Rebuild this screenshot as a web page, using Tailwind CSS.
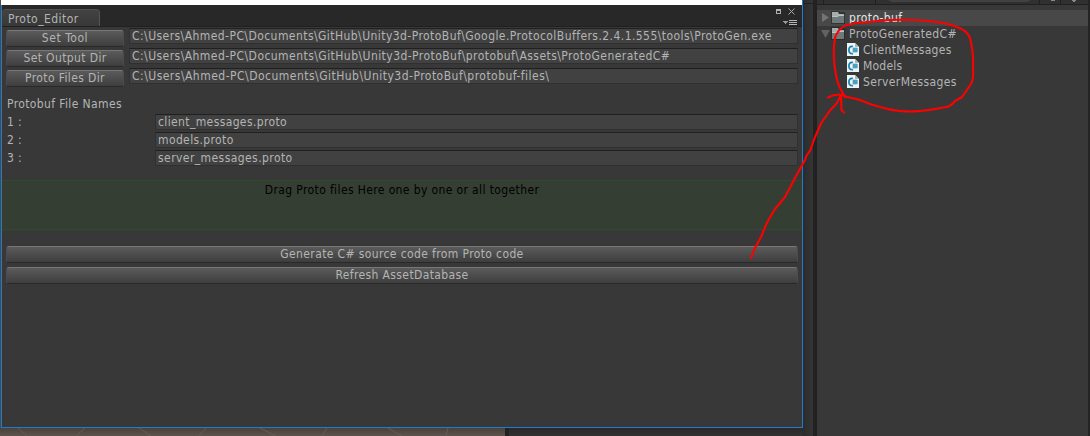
<!DOCTYPE html>
<html lang="en"><head><meta charset="utf-8"><title>Proto_Editor</title>
<script src="https://cdn.jsdelivr.net/npm/@tailwindcss/browser@4"></script></head>
<body class="relative h-[436px] w-[1090px] overflow-hidden bg-[#383838] font-['DejaVu_Sans_Condensed','DejaVu_Sans',sans-serif] text-[12px] leading-[16px] tracking-[0.38px] text-[#b4b4b4] [font-stretch:75%]">
<div class="flex h-full">
  <div class="flex w-[803px] shrink-0 flex-col bg-[#4c4a48]">
    <div class="ml-px h-[5px] shrink-0 border-r border-[#1c78cc] bg-white"></div>
    <main class="ml-px flex h-[423px] shrink-0 flex-col border-x border-b border-[#1f7bcc] bg-[#383838]">
      <header class="flex h-[22px] shrink-0 items-end justify-between border-b border-[#202020] bg-[#282828]">
        <div class="h-[17px] w-[98px] rounded-t-sm border-t border-r border-t-[#505050] border-r-[#555] bg-linear-to-b from-[#424242] to-[#383838] pt-px pl-[6px]"><span class="tracking-[0.45px]">Proto_Editor</span></div>
        <svg class="h-[21px] w-[30px]" viewBox="0 0 30 21" shape-rendering="crispEdges"><path fill="#b0b0b0" fill-rule="evenodd" d="M4 4h5v5H4zM5 6h3v2H5z"/><path d="m16.500 3.500 6 6m0-6-6 6" stroke="#aaa" shape-rendering="auto"/><path fill="#999" d="M11 16h5l-2.500 3z"/><path fill="#b5b5b5" d="M17 15h8v1h-8zM17 17h8v1h-8zM17 19h8v1h-8z"/></svg>
      </header>
      <section class="pl-[4px]">
        <div class="flex h-[20px] items-start gap-[5px]">
          <button class="mt-[3px] h-[17px] w-[118px] rounded-[3px] border border-[#4c4c4c] border-t-[#777] border-b-[#292929] bg-linear-to-b from-[#5b5b5b] to-[#3e3e3e] leading-[15px] tracking-[0.55px]">Set Tool</button>
          <div class="mt-px h-[16px] w-[669px] border border-[#303030] border-t-[#202020] bg-[#414141] pl-[2px] leading-[15px] whitespace-nowrap"><span class="tracking-[0.44px]">C:\Users\Ahmed-PC\Documents\GitHub\Unity3d-ProtoBuf\Google.ProtocolBuffers.2.4.1.555\tools\ProtoGen.exe</span></div>
        </div>
        <div class="flex h-[20px] items-start gap-[5px]">
          <button class="mt-[3px] h-[17px] w-[118px] rounded-[3px] border border-[#4c4c4c] border-t-[#777] border-b-[#292929] bg-linear-to-b from-[#5b5b5b] to-[#3e3e3e] leading-[15px]">Set Output Dir</button>
          <div class="mt-px h-[16px] w-[669px] border border-[#303030] border-t-[#202020] bg-[#414141] pl-[2px] leading-[15px]"><span class="tracking-[0.45px]">C:\Users\Ahmed-PC\Documents\GitHub\Unity3d-ProtoBuf\protobuf\Assets\ProtoGeneratedC#</span></div>
        </div>
        <div class="flex h-[20px] items-start gap-[5px]">
          <button class="mt-[3px] h-[17px] w-[118px] rounded-[3px] border border-[#4c4c4c] border-t-[#777] border-b-[#292929] bg-linear-to-b from-[#5b5b5b] to-[#3e3e3e] leading-[15px]">Proto Files Dir</button>
          <div class="mt-px h-[16px] w-[669px] border border-[#303030] border-t-[#202020] bg-[#414141] pl-[2px] leading-[15px]"><span class="tracking-[0.48px]">C:\Users\Ahmed-PC\Documents\GitHub\Unity3d-ProtoBuf\protobuf-files\</span></div>
        </div>
      </section>
      <h2 class="mt-[9px] ml-[5px] h-[16px]"><span>Protobuf File Names</span></h2>
      <section class="mt-[2px] grid grid-cols-[148px_643px] gap-y-[2px] pl-[5px]">
        <span>1 :</span><div class="h-[16px] border border-[#303030] border-t-[#202020] bg-[#414141] pl-[2px] leading-[15px]"><span>client_messages.proto</span></div>
        <span>2 :</span><div class="h-[16px] border border-[#303030] border-t-[#202020] bg-[#414141] pl-[2px] leading-[15px]"><span>models.proto</span></div>
        <span>3 :</span><div class="h-[16px] border border-[#303030] border-t-[#202020] bg-[#414141] pl-[2px] leading-[15px]"><span class="tracking-[0.43px]">server_messages.proto</span></div>
      </section>
      <div class="mt-[14px] h-[50px] border-y border-[#304a30] bg-[#353e33] pt-px text-center text-black"><span>Drag Proto files Here one by one or all together</span></div>
      <section class="mt-[16px] flex flex-col gap-[4px] px-[4px]">
        <button class="h-[17px] rounded-[3px] border border-[#4c4c4c] border-t-[#777] border-b-[#292929] bg-linear-to-b from-[#5b5b5b] to-[#3e3e3e] leading-[15px]"><span>Generate C# source code from Proto code</span></button>
        <button class="h-[17px] rounded-[3px] border border-[#4c4c4c] border-t-[#777] border-b-[#292929] bg-linear-to-b from-[#5b5b5b] to-[#3e3e3e] leading-[15px]"><span>Refresh AssetDatabase</span></button>
      </section>
    </main>
    <div class="flex h-[8px]"><svg class="h-[8px] w-[505px] bg-linear-to-b from-[#48423d] to-[#5d534c]" viewBox="0 0 505 8"><path d="m18 0 9 8M85 0l-9 8M139 0l12 8M206 0l-7 8M260 0l16 8M327 0l-5 8M388 0l14 8M448 0l-2 8" fill="none" stroke="#655c56"/></svg><div class="w-[4px] bg-[#222]"></div><div class="flex-1 bg-linear-to-b from-[#292929] to-[#323232]"></div></div>
  </div>
  <div class="w-[10px] bg-linear-to-r from-[#2b2b2b] to-[#353535]"><div class="mt-[3px] h-px bg-[#202020]"></div></div><div class="w-[4px] bg-[#222]"></div>
  <aside class="flex w-[273px] flex-col border-r-2 border-[#242424]">
    <svg class="h-[5px] w-[271px]" viewBox="0 0 271 5" shape-rendering="crispEdges"><path fill="#303030" d="M0 0h271v4H0z"/><path fill="#202020" d="M0 4h271v1H0zM6 0h1v4H6zM58 0h1v4h-1zM222 0h1v4h-1zM243 0h1v4h-1z"/><path fill="#414141" d="M71 0h143l-4 2H75z"/><path fill="#888" d="M234 0h4v1h-4zM255 0h4v1h-4zM256 1h2v1h-2z"/></svg><div class="h-[5px]"></div>
    <div class="flex h-[16px] items-center bg-[#484848] text-[#e5e5e5]">
      <svg class="mr-[2px] ml-[3px] h-[16px] w-[27px]" viewBox="0 0 27 16"><path fill="#747474" d="m2 3 7 4.500L2 12z"/><path fill="#303434" d="M11 1h8l1 1h5v12H11z"/><path fill="#a7adad" d="M12 2h6l1 2h5v3H12z"/><path fill="#6f7979" d="M12 7h5l2-1h5v7H12z"/><path d="M12 6.500h5l2-1h5" fill="none" stroke="#bcc2c2"/></svg><span>proto-buf</span></div>
    <div class="flex h-[16px] items-center">
      <svg class="mr-[2px] ml-[3px] h-[16px] w-[27px]" viewBox="0 0 27 16"><path fill="#626262" d="M1 4h9l-4.500 8z"/><path fill="#292c2c" d="M11 1h8l1 1h5v12H11z"/><path fill="#a7adad" d="M12 2h6l1 2h5v3H12z"/><path fill="#6f7979" d="M12 7h5l2-1h5v7H12z"/><path d="M12 6.500h5l2-1h5" fill="none" stroke="#bcc2c2"/></svg><span>ProtoGeneratedC#</span></div>
    <div class="flex h-[16px] items-center">
      <svg class="mr-[4px] ml-[30px] h-[16px] w-[12px]" viewBox="0 0 12 16"><path fill="#eef3f5" d="M0 1h8l4 4v9H0z"/><path fill="#a9b9bf" d="M8 1v4h4z"/><path d="M6 4.500C.500 3 .500 13 6 11.500" fill="none" stroke="#1683ad" stroke-width="1.700"/><path d="M7 5.500v5M9 5.500v5M5.500 7H11M5.500 9H11" fill="none" stroke="#1683ad"/></svg><span class="tracking-[0.32px]">ClientMessages</span></div>
    <div class="flex h-[16px] items-center">
      <svg class="mr-[4px] ml-[30px] h-[16px] w-[12px]" viewBox="0 0 12 16"><path fill="#eef3f5" d="M0 1h8l4 4v9H0z"/><path fill="#a9b9bf" d="M8 1v4h4z"/><path d="M6 4.500C.500 3 .500 13 6 11.500" fill="none" stroke="#1683ad" stroke-width="1.700"/><path d="M7 5.500v5M9 5.500v5M5.500 7H11M5.500 9H11" fill="none" stroke="#1683ad"/></svg><span class="tracking-[0.2px]">Models</span></div>
    <div class="flex h-[16px] items-center">
      <svg class="mr-[4px] ml-[30px] h-[16px] w-[12px]" viewBox="0 0 12 16"><path fill="#eef3f5" d="M0 1h8l4 4v9H0z"/><path fill="#a9b9bf" d="M8 1v4h4z"/><path d="M6 4.500C.500 3 .500 13 6 11.500" fill="none" stroke="#1683ad" stroke-width="1.700"/><path d="M7 5.500v5M9 5.500v5M5.500 7H11M5.500 9H11" fill="none" stroke="#1683ad"/></svg><span>ServerMessages</span></div>
  </aside>
</div>
<svg class="pointer-events-none absolute inset-0 h-[436px] w-[1090px]" viewBox="0 0 1090 436" fill="none" stroke="#f00" stroke-width="2.100" stroke-linecap="round" stroke-linejoin="round">
  <path d="M845 97 840 88C838 84 837 80 836 75Q832 55 835 38 837 31 843 27C850 22 865 23 877 21Q907 18 937 22 950 24 957 27 968 31 970 38 974 54 973 68 974 78 971 84L962 97 955 101Q950 107 946 107 932 110 920 111 910 112 900 111 889 110 880 107L870 104 860 100 852 98"/>
  <path d="m751 258 3-8 8-15Q765 226 769 219L775 209 785 197 795 178 805 160Q806 155 810 151L815 137 821.500 122.500 830 110.500 837 103 841 95M828 97.500Q834 94 841 94.500L847 97 852 98M841 95 841.500 110 844 112.500"/>
</svg>
</body></html>
